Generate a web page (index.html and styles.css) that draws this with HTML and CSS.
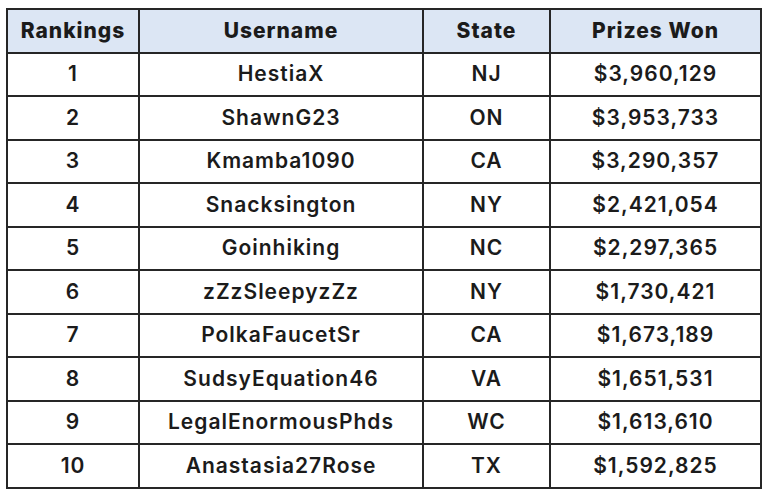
FILE: index.html
```html
<!DOCTYPE html>
<html lang="en">
<head>
<meta charset="utf-8">
<title>Rankings</title>
<link rel="stylesheet" href="styles.css">
</head>
<body>
<table class="board">
  <colgroup>
    <col class="c-rank"><col class="c-user"><col class="c-state"><col class="c-prize">
  </colgroup>
  <thead>
    <tr><th>Rankings</th><th>Username</th><th>State</th><th>Prizes Won</th></tr>
  </thead>
  <tbody>
    <tr><td>1</td><td>HestiaX</td><td>NJ</td><td>$3,960,129</td></tr>
    <tr><td>2</td><td>ShawnG23</td><td>ON</td><td>$3,953,733</td></tr>
    <tr><td>3</td><td>Kmamba1090</td><td>CA</td><td>$3,290,357</td></tr>
    <tr><td>4</td><td>Snacksington</td><td>NY</td><td>$2,421,054</td></tr>
    <tr><td>5</td><td>Goinhiking</td><td>NC</td><td>$2,297,365</td></tr>
    <tr><td>6</td><td>zZzSleepyzZz</td><td>NY</td><td>$1,730,421</td></tr>
    <tr><td>7</td><td>PolkaFaucetSr</td><td>CA</td><td>$1,673,189</td></tr>
    <tr><td>8</td><td>SudsyEquation46</td><td>VA</td><td>$1,651,531</td></tr>
    <tr><td>9</td><td>LegalEnormousPhds</td><td>WC</td><td>$1,613,610</td></tr>
    <tr><td>10</td><td>Anastasia27Rose</td><td>TX</td><td>$1,592,825</td></tr>
  </tbody>
</table>
</body>
</html>
```
FILE: styles.css
```css
html, body {
  margin: 0;
  padding: 0;
  background: #ffffff;
}
body {
  padding: 8px 0 0 6px;
  font-family: Inter, "Noto Sans", sans-serif;
  color: #1b1b1b;
}
.board {
  border-collapse: collapse;
  table-layout: fixed;
  width: 754px;
}
.c-rank { width: 132px; }
.c-user { width: 284px; }
.c-state { width: 127px; }
.c-prize { width: 211px; }
.board th,
.board td {
  border: 2px solid #262626;
  text-align: center;
  height: 41.5px;
  padding: 0;
  font-size: 21px;
  line-height: 24px;
  letter-spacing: 1px;
}
.board th {
  background: #dce6f4;
  font-weight: 800;
}
.board td {
  font-weight: 600;
}
```
